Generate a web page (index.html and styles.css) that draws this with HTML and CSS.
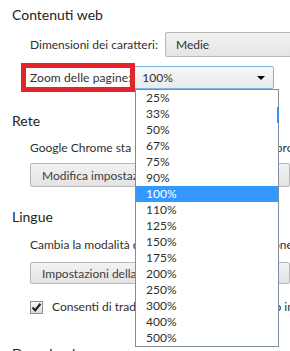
FILE: index.html
```html
<!DOCTYPE html>
<html lang="it">
<head>
<meta charset="utf-8">
<title>Impostazioni</title>
<link rel="stylesheet" href="styles.css">
</head>
<body>
<div class="page">
  <section class="sec sec-web">
    <h3 class="title">Contenuti web</h3>
    <div class="indent">
      <div class="row row-font">
        <span class="label">Dimensioni dei caratteri:</span>
        <div class="select select-font">Medie</div>
      </div>
      <div class="row row-zoom">
        <span class="label label-zoom">Zoom delle pagine:</span>
        <div class="select select-zoom"><span>100%</span><span class="arrow"></span></div>
      </div>
    </div>
  </section>

  <section class="sec sec-net">
    <h3 class="title">Rete</h3>
    <div class="indent">
      <p class="text text-net">Google Chrome sta utilizzando le impostazioni  proxy di sistema del computer per connettersi alla rete.</p>
      <button class="btn btn-proxy">Modifica impostazioni proxy...</button>
    </div>
  </section>

  <section class="sec sec-lang">
    <h3 class="title">Lingue</h3>
    <div class="indent">
      <p class="text text-lang">Cambia la modalità di gestione e di visualizzazione delle lingue e c</p>
      <button class="btn btn-lang">Impostazioni della lingua e dell'immissione...</button>
      <label class="check-row">
        <span class="checkbox"><svg width="11" height="11" viewBox="0 0 11 11"><path d="M1.6 5.6 L4.2 8.4 L9.4 1.8" fill="none" stroke="#222" stroke-width="2.2" stroke-linejoin="miter"/></svg></span>
        <span class="text">Consenti di tradurre le pagine che non sono in una lingua che conosci</span>
      </label>
    </div>
  </section>

  <section class="sec sec-dl">
    <h3 class="title">Download</h3>
  </section>
</div>

<div class="highlight-box"></div>

<ul class="dropdown">
  <li>25%</li>
  <li>33%</li>
  <li>50%</li>
  <li>67%</li>
  <li>75%</li>
  <li>90%</li>
  <li class="selected">100%</li>
  <li>110%</li>
  <li>125%</li>
  <li>150%</li>
  <li>175%</li>
  <li>200%</li>
  <li>250%</li>
  <li>300%</li>
  <li>400%</li>
  <li>500%</li>
</ul>
<span class="focus-mark"></span>
</body>
</html>
```

FILE: styles.css
```css
html, body {
  margin: 0;
  padding: 0;
  background: #ffffff;
  overflow: hidden;
  width: 290px;
  height: 351px;
}

body {
  font-family: "Lato", "Liberation Sans", sans-serif;
  font-size: 12px;
  color: #303030;
  position: relative;
}

.page {
  padding: 5px 0 0 12px;
  width: 600px;
}

.sec {
  margin: 0;
}

.title {
  margin: 0;
  font-size: 14px;
  font-weight: normal;
  line-height: 20px;
  height: 20px;
  color: #222;
  white-space: nowrap;
}

.indent {
  padding-left: 18px;
}

.row {
  display: flex;
  align-items: center;
  white-space: nowrap;
}

.row-font {
  margin-top: 7px;
  height: 25px;
}

.row-zoom {
  margin-top: 9px;
  height: 23px;
}

.label-zoom {
  letter-spacing: 0.1px;
}

.select {
  box-sizing: border-box;
  display: flex;
  align-items: center;
  color: #303030;
  border-radius: 2px;
}

.select-font {
  margin-left: 7px;
  width: 200px;
  height: 25px;
  padding-left: 10px;
  border: 1px solid #b8b8b8;
  background: linear-gradient(#f2f2f2, #e5e5e5);
}

.select-zoom {
  margin-left: 0;
  width: 143px;
  height: 23px;
  padding: 0 8px 0 10px;
  justify-content: space-between;
  border: 1px solid #7eb4ea;
  background: linear-gradient(#f7f7f7, #e8eaec);
}

.arrow {
  width: 0;
  height: 0;
  border-left: 4px solid transparent;
  border-right: 4px solid transparent;
  border-top: 4px solid #000;
}

.sec-net {
  margin-top: 22px;
}

.sec-lang {
  margin-top: 20px;
}

.sec-dl {
  margin-top: 29px;
}

.text {
  margin: 0;
  line-height: 16px;
  white-space: nowrap;
}

.text-net {
  margin-top: 9px;
}

.text-lang {
  margin-top: 10px;
}

.btn {
  display: block;
  box-sizing: border-box;
  font-family: inherit;
  font-size: 12px;
  color: #404040;
  text-align: left;
  white-space: nowrap;
  border: 1px solid #b8b8b8;
  border-radius: 2px;
  background: linear-gradient(#f2f2f2, #e3e3e3);
  padding: 0 0 0 11px;
  width: 260px;
}

.btn-proxy {
  margin-top: 7px;
  height: 24px;
}

.btn-lang {
  margin-top: 9px;
  height: 22px;
}

.check-row {
  display: flex;
  align-items: center;
  gap: 9px;
  margin-top: 15px;
  height: 16px;
  white-space: nowrap;
}

.checkbox {
  box-sizing: border-box;
  width: 13px;
  height: 13px;
  border: 1px solid #8f8f8f;
  background: linear-gradient(#f6f6f6, #dcdcdc);
  display: flex;
  align-items: center;
  justify-content: center;
  flex: none;
}

.highlight-box {
  position: absolute;
  left: 21px;
  top: 63px;
  width: 114px;
  height: 29px;
  box-sizing: border-box;
  border: 5px solid #e3242b;
}

.dropdown {
  position: absolute;
  left: 135px;
  top: 89px;
  width: 144px;
  margin: 0;
  padding: 0;
  list-style: none;
  box-sizing: border-box;
  border: 1px solid #7f8e9c;
  background: #ffffff;
}

.dropdown li {
  height: 16px;
  line-height: 16px;
  padding-left: 10px;
  color: #303030;
}

.dropdown li.selected {
  background: #3399ff;
  color: #ffffff;
}

.focus-mark {
  position: absolute;
  left: 277px;
  top: 107px;
  width: 2px;
  height: 16px;
  background: #3d8ee6;
}
```
